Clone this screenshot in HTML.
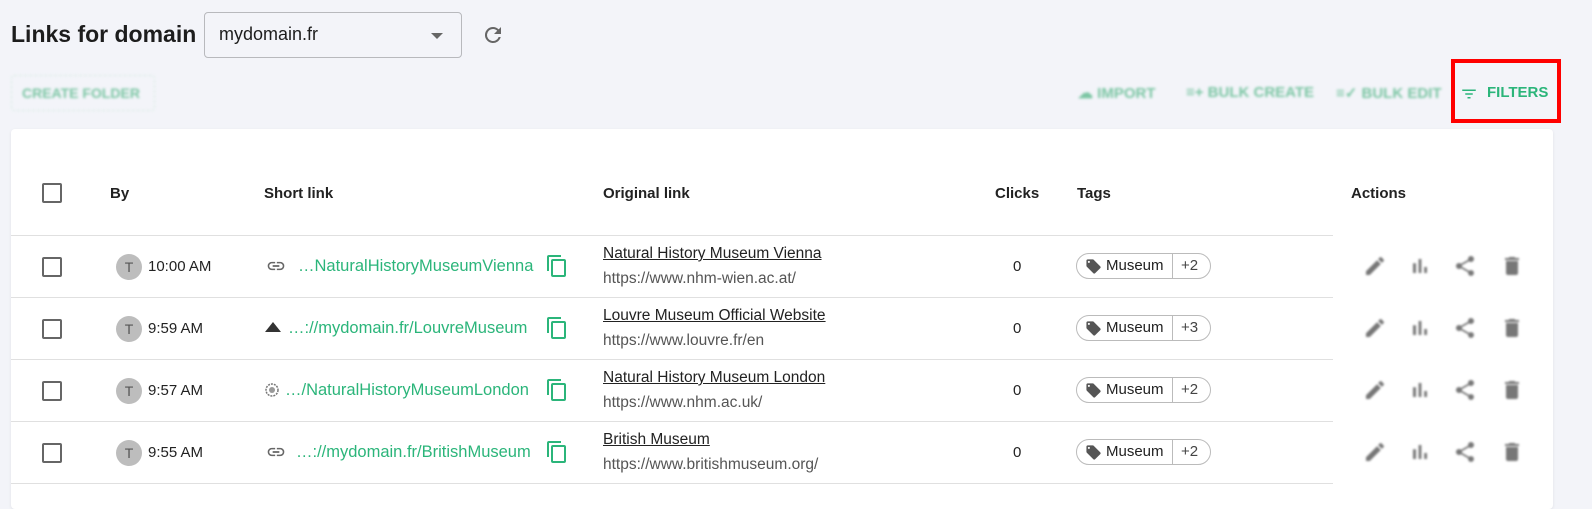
<!DOCTYPE html>
<html><head><meta charset="utf-8"><style>
*{box-sizing:border-box;margin:0;padding:0}
body{width:1592px;height:502px;background:#f3f4f9;font-family:"Liberation Sans",Roboto,sans-serif;color:#222;position:relative;overflow:hidden}
.abs{position:absolute}
.title{left:11px;top:21px;font-size:23px;font-weight:bold;color:#1d1d1d}
.sel{left:204px;top:12px;width:258px;height:46px;border:1px solid #b8b9bd;border-radius:4px;font-size:18px;padding:11px 14px;color:#1d1d1d}
.caret{position:absolute;right:18px;top:20px;border-left:6px solid transparent;border-right:6px solid transparent;border-top:6px solid #666}
.btn{font-size:15px;font-weight:bold;color:#5dba8e;filter:blur(1.2px);opacity:.8;white-space:nowrap}
.card{left:11px;top:129px;width:1542px;height:380px;background:#fff;border-radius:4px;box-shadow:0 1px 3px rgba(0,0,0,.08)}
.hd{font-size:15px;font-weight:bold;color:#222;top:185px}
.cb{width:20px;height:20px;border:2px solid #666;border-radius:2px;left:42px}
.line{left:11px;width:1322px;height:1px;background:#e0e0e0}
.av{left:116px;width:26px;height:26px;border-radius:50%;background:#bdbdbd;color:#555;font-size:14px;text-align:center;line-height:26px}
.t{font-size:15px;color:#222}
.sl{font-size:16.5px;color:#2bb57a;white-space:nowrap}
.ot{font-size:15.5px;color:#222;text-decoration:underline;left:603px}
.ou{font-size:15.5px;color:#555;left:603px}
.tag{left:1076px;height:26px;width:135px;border:1px solid #bbb;border-radius:13px;font-size:15px;color:#222}
.act{filter:blur(1px)}
</style></head><body>
<div class="abs title">Links for domain</div>
<div class="abs sel">mydomain.fr<div class="caret"></div></div>
<svg class="abs" style="left:481px;top:23px" width="24" height="24" viewBox="0 0 24 24"><path fill="#666" d="M17.65 6.35A7.96 7.96 0 0 0 12 4a8 8 0 1 0 7.73 10h-2.08A6 6 0 1 1 12 6c1.66 0 3.14.69 4.22 1.78L13 11h7V4l-2.35 2.35z"/></svg>
<div class="abs btn" style="left:11px;top:75px;width:144px;height:36px;border:1px dashed #cfe9dc;border-radius:3px;padding:9px 10px;font-size:14px">CREATE FOLDER</div>
<div class="abs btn" style="left:1078px;top:84px">☁ IMPORT</div>
<div class="abs btn" style="left:1186px;top:84px">≡+ BULK CREATE</div>
<div class="abs btn" style="left:1336px;top:84px">≡✓ BULK EDIT</div>
<div class="abs" style="left:1451px;top:59px;width:110px;height:64px;border:4px solid #f00"></div>
<svg class="abs" style="left:1460px;top:85px" width="18" height="18" viewBox="0 0 24 24"><path fill="#2bb57a" d="M3 6h18v2H3zm4 5h10v2H7zm3 5h4v2h-4z"/></svg>
<div class="abs" style="left:1487px;top:84px;font-size:15px;font-weight:bold;color:#2bb57a">FILTERS</div>
<div class="abs card"></div>
<div class="abs cb" style="top:183px"></div>
<div class="abs hd" style="left:110px">By</div>
<div class="abs hd" style="left:264px">Short link</div>
<div class="abs hd" style="left:603px">Original link</div>
<div class="abs hd" style="left:995px">Clicks</div>
<div class="abs hd" style="left:1077px">Tags</div>
<div class="abs hd" style="left:1351px">Actions</div>
<div class="abs line" style="top:235px"></div>
<div class="abs line" style="top:297px"></div>
<div class="abs line" style="top:359px"></div>
<div class="abs line" style="top:421px"></div>
<div class="abs line" style="top:483px"></div>

<div id="rows"></div>
<div class="abs cb" style="top:257px"></div>
<div class="abs av" style="top:254px">T</div><div class="abs t" style="left:148px;top:258px">10:00 AM</div>
<svg class="abs" style="left:264px;top:256px" width="24" height="20" viewBox="0 0 24 24"><path fill="#666" d="M3.9 12c0-1.71 1.39-3.1 3.1-3.1h4V7H7a5 5 0 0 0 0 10h4v-1.9H7c-1.71 0-3.1-1.39-3.1-3.1zM8 13h8v-2H8v2zm9-6h-4v1.9h4c1.71 0 3.1 1.39 3.1 3.1s-1.39 3.1-3.1 3.1h-4V17h4a5 5 0 0 0 0-10z"/></svg>
<div class="abs sl" style="left:298px;top:257px">…NaturalHistoryMuseumVienna</div>
<div class="abs ot" style="top:245px">Natural History Museum Vienna</div><div class="abs ou" style="top:270px">https://www.nhm-wien.ac.at/</div>
<div class="abs t" style="left:1013px;top:258px">0</div>

<div class="abs cb" style="top:319px"></div>
<div class="abs av" style="top:316px">T</div><div class="abs t" style="left:148px;top:320px">9:59 AM</div>
<svg class="abs" style="left:265px;top:322px" width="16" height="10" viewBox="0 0 16 10"><path fill="#333" d="M8 0L16 10H0z"/></svg>
<div class="abs sl" style="left:288px;top:319px">…://mydomain.fr/LouvreMuseum</div>
<div class="abs ot" style="top:307px">Louvre Museum Official Website</div><div class="abs ou" style="top:332px">https://www.louvre.fr/en</div>
<div class="abs t" style="left:1013px;top:320px">0</div>

<div class="abs cb" style="top:381px"></div>
<div class="abs av" style="top:378px">T</div><div class="abs t" style="left:148px;top:382px">9:57 AM</div>
<svg class="abs" style="left:265px;top:383px" width="14" height="14" viewBox="0 0 14 14"><circle cx="7" cy="7" r="6" fill="none" stroke="#777" stroke-width="1.5" stroke-dasharray="2 1"/><circle cx="7" cy="7" r="3" fill="#999"/></svg>
<div class="abs sl" style="left:285px;top:381px">…/NaturalHistoryMuseumLondon</div>
<div class="abs ot" style="top:369px">Natural History Museum London</div><div class="abs ou" style="top:394px">https://www.nhm.ac.uk/</div>
<div class="abs t" style="left:1013px;top:382px">0</div>

<div class="abs cb" style="top:443px"></div>
<div class="abs av" style="top:440px">T</div><div class="abs t" style="left:148px;top:444px">9:55 AM</div>
<svg class="abs" style="left:264px;top:442px" width="24" height="20" viewBox="0 0 24 24"><path fill="#666" d="M3.9 12c0-1.71 1.39-3.1 3.1-3.1h4V7H7a5 5 0 0 0 0 10h4v-1.9H7c-1.71 0-3.1-1.39-3.1-3.1zM8 13h8v-2H8v2zm9-6h-4v1.9h4c1.71 0 3.1 1.39 3.1 3.1s-1.39 3.1-3.1 3.1h-4V17h4a5 5 0 0 0 0-10z"/></svg>
<div class="abs sl" style="left:296px;top:443px">…://mydomain.fr/BritishMuseum</div>
<div class="abs ot" style="top:431px">British Museum</div><div class="abs ou" style="top:456px">https://www.britishmuseum.org/</div>
<div class="abs t" style="left:1013px;top:444px">0</div>

<script>
var ys=[266,328,390,452],pl=["+2","+3","+2","+2"];
var h="";
ys.forEach(function(y,i){
h+='<svg class="abs" style="left:545px;top:'+(y-12)+'px" width="24" height="24" viewBox="0 0 24 24"><path fill="#2bb57a" d="M16 1H4a2 2 0 0 0-2 2v14h2V3h12V1zm3 4H8a2 2 0 0 0-2 2v14a2 2 0 0 0 2 2h11a2 2 0 0 0 2-2V7a2 2 0 0 0-2-2zm0 16H8V7h11v14z"/></svg>';
h+='<div class="abs tag" style="top:'+(y-13)+'px"><svg style="position:absolute;left:8px;top:4px" width="17" height="17" viewBox="0 0 24 24"><path fill="#555" d="M21.4 11.6l-9-9A2 2 0 0 0 11 2H4a2 2 0 0 0-2 2v7c0 .55.22 1.05.59 1.42l9 9a2 2 0 0 0 2.82 0l7-7a2 2 0 0 0-.01-2.82zM5.5 7A1.5 1.5 0 1 1 5.5 4a1.5 1.5 0 0 1 0 3z"/></svg><span style="position:absolute;left:29px;top:3px">Museum</span><span style="position:absolute;left:95px;top:0;height:24px;border-left:1px solid #bbb"></span><span style="position:absolute;left:104px;top:3px;color:#444">'+pl[i]+'</span></div>';
h+='<svg class="abs act" style="left:1363px;top:'+(y-12)+'px" width="24" height="24" viewBox="0 0 24 24"><path fill="#777" d="M3 17.25V21h3.75L17.81 9.94l-3.75-3.75L3 17.25zM20.71 7.04a1 1 0 0 0 0-1.41l-2.34-2.34a1 1 0 0 0-1.41 0l-1.83 1.83 3.75 3.75 1.830-1.83z"/></svg>';
h+='<svg class="abs act" style="left:1408px;top:'+(y-12)+'px" width="24" height="24" viewBox="0 0 24 24"><path fill="#777" d="M5 9.2h3V19H5zM10.6 5h2.8v14h-2.8zm5.6 8H19v6h-2.8z"/></svg>';
h+='<svg class="abs act" style="left:1453px;top:'+(y-12)+'px" width="24" height="24" viewBox="0 0 24 24"><path fill="#777" d="M18 16.08c-.76 0-1.44.3-1.96.77L8.91 12.7c.05-.23.09-.46.09-.7s-.04-.47-.09-.7l7.05-4.11A2.99 2.99 0 1 0 15 5c0 .24.04.47.09.7L8.04 9.81A3 3 0 1 0 8.04 14.19l7.12 4.16c-.05.21-.08.43-.08.65A2.92 2.92 0 1 0 18 16.08z"/></svg>';
h+='<svg class="abs act" style="left:1500px;top:'+(y-12)+'px" width="24" height="24" viewBox="0 0 24 24"><path fill="#777" d="M6 19a2 2 0 0 0 2 2h8a2 2 0 0 0 2-2V7H6v12zM19 4h-3.5l-1-1h-5l-1 1H5v2h14V4z"/></svg>';
});
document.getElementById("rows").outerHTML=h;
</script>
</body></html>
